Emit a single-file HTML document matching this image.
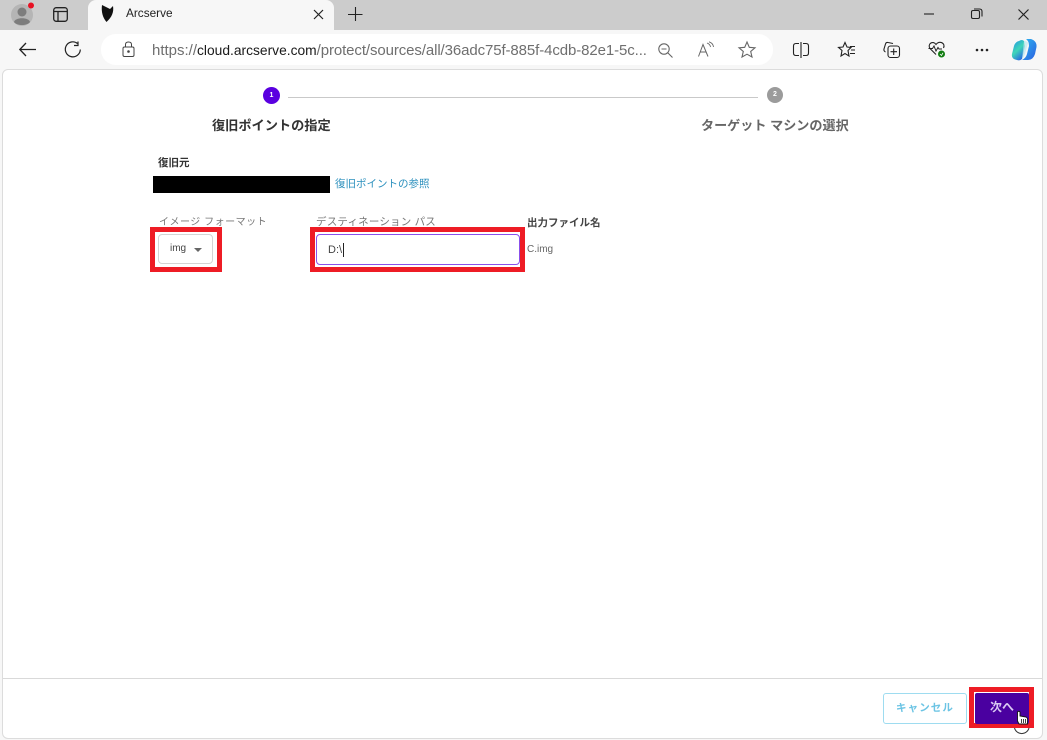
<!DOCTYPE html>
<html><head><meta charset="utf-8">
<style>
html,body{margin:0;padding:0;width:1047px;height:740px;overflow:hidden;background:#f7f7f7}
body{position:relative;font-family:"Liberation Sans","Noto Sans CJK JP",sans-serif;filter:blur(.3px)}
.a{position:absolute;white-space:nowrap;line-height:1}
svg{position:absolute;overflow:visible;fill:none}
.red{position:absolute;border:5px solid #ee1c25;box-sizing:border-box}
</style></head><body>
<div class="a" style="left:0;top:0;width:1047px;height:30px;background:#cccccc"></div>
<div class="a" style="left:88px;top:0;width:246px;height:30px;background:#f7f7f7;border-radius:8px 8px 0 0"></div>
<!-- profile -->
<svg style="left:10px;top:3px" width="26" height="24"><circle cx="12" cy="12" r="11" fill="#b5b5b5"/><circle cx="12" cy="9" r="4.500" fill="#7d7d7d"/><path d="M4 19c1-5 15-5 16 0c-3 4-13 4-16 0z" fill="#7d7d7d"/><circle cx="21" cy="2.500" r="3" fill="#e81123"/></svg>
<svg style="left:53px;top:7px" width="16" height="16" stroke="#222" stroke-width="1.300"><rect x=".7" y=".7" width="13.600" height="13.600" rx="2.500"/><path d="M1 4.500H14M5 4.500V14" /></svg>
<svg style="left:101px;top:5px" width="15" height="18"><path d="M1 0L9 4L12 1C13 7 11 12 5.500 17C2 13 0 7 1 0z" fill="#111"/></svg>
<div class="a" style="left:126px;top:8px;font-size:11.800px;color:#222">Arcserve</div>
<svg style="left:313px;top:9px" width="11" height="11" stroke="#222" stroke-width="1.200"><path d="M1 1L10 10M10 1L1 10"/></svg>
<svg style="left:348px;top:7px" width="15" height="15" stroke="#222" stroke-width="1.100"><path d="M7.500 0V14M0 7.500H14.500"/></svg>
<svg style="left:924px;top:13px" width="11" height="2" stroke="#222" stroke-width="1.100"><path d="M0 1H10"/></svg>
<svg style="left:971px;top:8px" width="12" height="12" stroke="#222" stroke-width="1.100"><rect x=".5" y="2.500" width="8" height="8" rx="1.500"/><path d="M3 1H8.500Q11 1 11 3.500V8.500"/></svg>
<svg style="left:1018px;top:9px" width="11" height="11" stroke="#222" stroke-width="1.200"><path d="M.5 .5L10.500 10.500M10.500 .5L.5 10.500"/></svg>

<!-- toolbar -->
<svg style="left:19px;top:42px" width="18" height="15" stroke="#222" stroke-width="1.300"><path d="M.5 7.500H17M7 1L.8 7.500L7 14"/></svg>
<svg style="left:64px;top:41px" width="18" height="18" stroke="#222" stroke-width="1.200"><path d="M13.500 2.500A7.500 7.500 0 1 0 16.300 8.500M14 .5V4.500H10"/></svg>
<div class="a" style="left:101px;top:34px;width:672px;height:31px;background:#fff;border-radius:15px"></div>
<svg style="left:122px;top:41px" width="13" height="17" stroke="#444" stroke-width="1"><rect x="1" y="6" width="11" height="9.500" rx="1.500"/><path d="M3.500 6V3.500Q3.500 1 6.500 1Q9.500 1 9.500 3.500V6"/><circle cx="6.500" cy="10.500" r=".8" fill="#444"/></svg>
<div class="a" style="left:152px;top:43px;font-size:15px;color:#6f6f6f;width:500px;overflow:hidden"><span>https://</span><span style="color:#1a1a1a;font-size:13.800px">cloud.arcserve.com</span><span style="letter-spacing:-.1px">/protect/sources/all/36adc75f-885f-4cdb-82e1-5c...</span></div>
<svg style="left:658px;top:43px" width="15" height="15" stroke="#666" stroke-width="1.100"><circle cx="6" cy="6" r="5.200"/><path d="M3.500 6H8.500M10 10L14.500 14.500"/></svg>
<svg style="left:698px;top:41px" width="18" height="16" stroke="#666" stroke-width="1"><path d="M.5 15.500L5 3.500L10 15.500M2.200 11H8"/><path d="M9 2Q12 3 12.500 6M11 .8Q15 2 15.500 6" stroke-width=".9"/></svg>
<svg style="left:738px;top:41px" width="18" height="17" stroke="#666" stroke-width="1.100"><path d="M9 1L11.300 6.300L17 6.800L12.700 10.500L14 16L9 13.200L4 16L5.300 10.500L1 6.800L6.700 6.300z"/></svg>
<svg style="left:793px;top:42px" width="16" height="16" stroke="#222" stroke-width="1.100"><path d="M6 1.500H3Q.5 1.500 .5 4V11Q.5 13.500 3 13.500H6M10 1.500H13Q15.500 1.500 15.500 4V11Q15.500 13.500 13 13.500H10M8 0V16"/></svg>
<svg style="left:838px;top:41px" width="18" height="17" stroke="#222" stroke-width="1.100"><path d="M7 1.500L9 6L13 6.400L10 9.500L11 15L7 12.500L3 15L4 9.500L.5 6.400L5 6z"/><path d="M12 5.500H17M13 9H17M12 12.500H17"/></svg>
<svg style="left:883px;top:41px" width="17" height="17" stroke="#222" stroke-width="1.100"><path d="M2.500 11Q.5 10 1 8L2.500 3Q3 1 5 1.500L10 2.500"/><rect x="5" y="5" width="11.500" height="11.500" rx="2.500" fill="#f7f7f7"/><path d="M10.700 7.500V14M7.500 10.700H14"/></svg>
<svg style="left:928px;top:41px" width="19" height="18" stroke="#222" stroke-width="1.100"><path d="M8 13.500L2 7.500C-1 3 5-1 8 3.500C11-1 18 2 15.500 7"/><path d="M.5 7.500H4.500L6 5L8 10L10 6.500L11 8H14" stroke-width="1"/><circle cx="13.500" cy="13" r="3.500" fill="#107c10" stroke="none"/><path d="M12 13L13.500 14.500L15 11.800" stroke="#fff" stroke-width=".8"/></svg>
<svg style="left:975px;top:48px" width="14" height="4"><circle cx="2" cy="2" r="1.300" fill="#222"/><circle cx="7" cy="2" r="1.300" fill="#222"/><circle cx="12" cy="2" r="1.300" fill="#222"/></svg>
<svg style="left:1011px;top:38px" width="26" height="24"><defs><linearGradient id="g" x1="0" y1="0" x2=".6" y2="1"><stop offset="0" stop-color="#1f8fe8"/><stop offset=".55" stop-color="#3fd6b8"/><stop offset="1" stop-color="#2a6fe0"/></linearGradient><linearGradient id="h" x1="0" y1="0" x2="1" y2="1"><stop offset="0" stop-color="#2fb8f0"/><stop offset="1" stop-color="#2a5fe0"/></linearGradient></defs><path d="M8 3Q11 1 13 3L14 8L11 21Q9 23 6 22Q0 21 1 16L3 8Q4 4 8 3z" fill="url(#g)"/><path d="M15 1H20Q26 3 25.500 9L24 16Q22 22 17 22H11Q15 20 16 16L18 8Q18 3 15 1z" fill="url(#h)"/><path d="M13 3Q16 3 17 5L14 16Q13 19 11 21z" fill="#bde8ef" opacity=".7"/></svg>

<!-- page -->
<div class="a" style="left:2px;top:69px;width:1041px;height:670px;box-sizing:border-box;background:#fff;border:1px solid #dcdcdc;border-radius:6px"></div>
<div class="a" style="left:3px;top:678px;width:1039px;height:1px;background:#d9d9d9"></div>

<!-- stepper -->
<div class="a" style="left:263px;top:87px;width:17px;height:17px;border-radius:50%;background:#5a00e0;color:#fff;font-size:7px;line-height:17px;text-align:center;font-weight:bold">1</div>
<div class="a" style="left:288px;top:97px;width:470px;height:1px;background:#c9c9c9"></div>
<div class="a" style="left:767px;top:87px;width:16px;height:16px;border-radius:50%;background:#9b9b9b;color:#fff;font-size:7px;line-height:16px;text-align:center;font-weight:bold">2</div>
<div class="a" style="left:212px;top:119px;font-size:13.200px;font-weight:bold;color:#333">復旧ポイントの指定</div>
<div class="a" style="left:701px;top:119px;font-size:13.100px;font-weight:bold;color:#666">ターゲット マシンの選択</div>

<div class="a" style="left:158px;top:157px;font-size:10.500px;font-weight:bold;color:#333;padding-top:1px">復旧元</div>
<div class="a" style="left:153px;top:176px;width:177px;height:17px;background:#000"></div>
<div class="a" style="left:335px;top:179px;font-size:10.500px;color:#2a8fbd">復旧ポイントの参照</div>

<div class="a" style="left:159px;top:218px;font-size:10px;color:#777;letter-spacing:.5px">イメージ フォーマット</div>
<div class="a" style="left:316px;top:217px;font-size:10.500px;color:#777;letter-spacing:.2px">デスティネーション パス</div>
<div class="a" style="left:527px;top:218px;font-size:10.500px;font-weight:bold;color:#444">出力ファイル名</div>
<div class="a" style="left:527px;top:245px;font-size:10px;color:#666">C.img</div>

<div class="red" style="left:150px;top:227px;width:72px;height:45px"></div>
<div class="a" style="left:158px;top:234px;width:55px;height:30px;box-sizing:border-box;background:#fff;border:1px solid #d4d4d4;border-radius:4px"></div>
<div class="a" style="left:170px;top:244px;font-size:10px;color:#444">img</div>
<svg style="left:194px;top:248px" width="8" height="4"><path d="M0 0H8L4 4z" fill="#666"/></svg>

<div class="red" style="left:310px;top:227px;width:215px;height:45px"></div>
<div class="a" style="left:316px;top:234px;width:204px;height:31px;box-sizing:border-box;background:#fff;border:1.500px solid #8a50ea;border-radius:4px"></div>
<div class="a" style="left:328px;top:245px;font-size:11px;color:#444">D:\</div>
<div class="a" style="left:343px;top:243px;width:1px;height:14px;background:#222"></div>

<!-- footer -->
<div class="a" style="left:883px;top:693px;width:84px;height:31px;box-sizing:border-box;border:1px solid #9edcf0;border-radius:3px;background:#fff;color:#6cc4e4;font-size:10.500px;font-weight:bold;line-height:29px;text-align:center;letter-spacing:1.100px">キャンセル</div>
<div class="red" style="left:969px;top:687px;width:65px;height:41px"></div>
<div class="a" style="left:975px;top:693px;width:54px;height:31px;background:#4a00a0;border-radius:2px;color:#d9c9f2;font-size:12px;font-weight:bold;line-height:29px;padding-left:15px;box-sizing:border-box">次へ</div>
<svg style="left:1014px;top:709px" width="18" height="27"><path d="M.5 19A7.500 7.500 0 0 0 15 19" stroke="#333" stroke-width="1"/><path d="M3.500 3Q5 1.500 6 3V7L12 8Q14 9 13.500 12V15H5L3.500 12Z" fill="#fff" stroke="#111" stroke-width=".9"/><path d="M7.500 10V14M9.500 10V14M11.500 10V14" stroke="#111" stroke-width=".8"/></svg>
</body></html>
